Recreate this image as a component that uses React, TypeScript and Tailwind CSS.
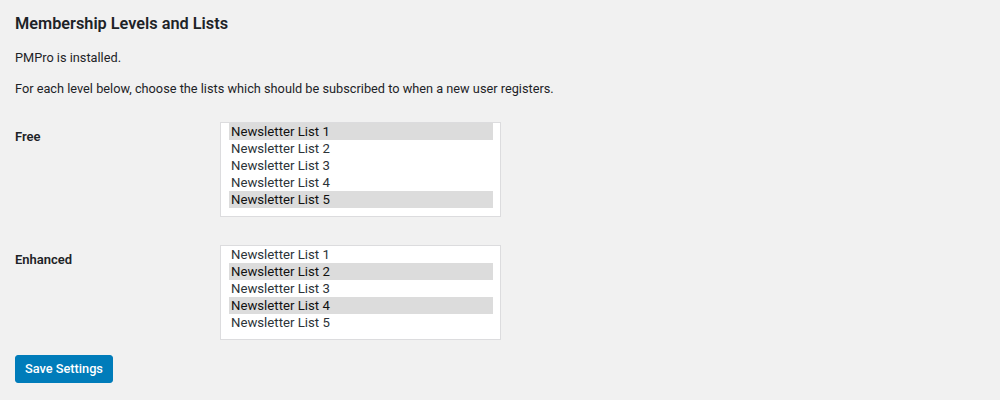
import React from "react";

const font = { fontFamily: "Roboto, 'Noto Sans', sans-serif" };

function ListBox({ selected }: { selected: number[] }) {
  const items = [1, 2, 3, 4, 5];
  return (
    <div className="w-[281px] h-[95px] bg-white border border-[#dcdcde] pl-[8px] pr-[7px] pt-[0px]">
      {items.map((i) => {
        const sel = selected.includes(i);
        return (
          <div
            key={i}
            className={`h-[17px] leading-[17px] pl-[2px] text-[13.2px] ${sel ? "bg-[#dcdcdc] text-[#111]" : "text-[#2c3338]"}`}
          >
            Newsletter List {i}
          </div>
        );
      })}
    </div>
  );
}

export default function App() {
  return (
    <div className="w-[1000px] h-[400px] bg-[#f1f1f1] text-[#1d2327] px-[15px] pt-[13px]" style={font}>
      <h2 className="text-[16.3px] font-semibold leading-[22px] m-0">Membership Levels and Lists</h2>
      <p className="text-[12.75px] leading-[19px] mt-[13px]">PMPro is installed.</p>
      <p className="text-[12.75px] leading-[19px] mt-[12px]">
        For each level below, choose the lists which should be subscribed to when a new user registers.
      </p>
      <div className="mt-[24px] flex flex-col gap-[28px]">
        <div className="flex">
          <div className="w-[205px] text-[13px] font-semibold pt-[5px]">Free</div>
          <ListBox selected={[1, 5]} />
        </div>
        <div className="flex">
          <div className="w-[205px] text-[13px] font-semibold pt-[5px]">Enhanced</div>
          <ListBox selected={[2, 4]} />
        </div>
      </div>
      <button className="mt-[15px] h-[28px] px-[9px] rounded-[3px] bg-[#007cba] text-white text-[12.75px] font-medium leading-[26px] border border-[#007cba]">
        Save Settings
      </button>
    </div>
  );
}
